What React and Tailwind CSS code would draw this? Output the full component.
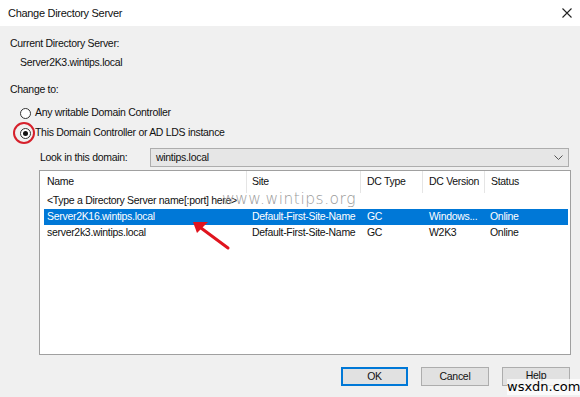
import React from 'react';

const cols = [
    { label: 'Name', w: 'w-[207px]', pl: 'pl-[7px]' },
    { label: 'Site', w: 'w-[114px]', pl: 'pl-[5px]' },
    { label: 'DC Type', w: 'w-[62px]', pl: 'pl-[6px]' },
    { label: 'DC Version', w: 'w-[62px]', pl: 'pl-[6px]' },
    { label: 'Status', w: 'w-[45px]', pl: 'pl-[6px]' },
];

const rows = [
    { name: 'Server2K16.wintips.local', site: 'Default-First-Site-Name', type: 'GC', ver: 'Windows...', status: 'Online', selected: true },
    { name: 'server2k3.wintips.local', site: 'Default-First-Site-Name', type: 'GC', ver: 'W2K3', status: 'Online' },
];

const Radio = ({ checked }) => (
    <div className="w-[11px] h-[11px] shrink-0 rounded-full border border-[#333] bg-white flex items-center justify-center">
        {checked && <div className="w-[5px] h-[5px] rounded-full bg-[#111]" />}
    </div>
);

const App = () => {
    return (
        <div className="relative w-[580px] h-[397px] overflow-hidden whitespace-nowrap bg-[#f0f0f0] text-[10.5px] tracking-[-0.3px] text-[#111] font-['Liberation_Sans',Arial,sans-serif]">
            {/* title bar */}
            <div className="h-[26px] bg-white flex items-center justify-between pl-[8px] pr-[8px]">
                <span className="text-[11px]">Change Directory Server</span>
                <svg width="10" height="10" viewBox="0 0 10 10">
                    <path d="M0.5 0.5 L9.5 9.5 M9.5 0.5 L0.5 9.5" stroke="#222" strokeWidth="1.1" />
                </svg>
            </div>

            <div className="px-[10px]">
                <div className="mt-[9px] h-[16px] leading-[16px]">Current Directory Server:</div>
                <div className="mt-[3px] h-[16px] leading-[16px] pl-[10px]">Server2K3.wintips.local</div>
                <div className="mt-[11px] h-[16px] leading-[16px]">Change to:</div>

                <div className="mt-[8px] h-[16px] pl-[10px] flex items-center gap-[4px]">
                    <Radio />
                    <span>Any writable Domain Controller</span>
                </div>
                <div className="relative mt-[4px] h-[16px] pl-[10px] flex items-center gap-[4px]">
                    <Radio checked />
                    <span>This Domain Controller or AD LDS instance</span>
                    <div className="absolute left-[3px] top-[-3px] w-[22px] h-[22px] rounded-full border-2 border-[#d6202b]" />
                </div>

                {/* domain combo */}
                <div className="mt-[7px] h-[19px] pl-[30px] flex items-center">
                    <span className="w-[110px]">Look in this domain:</span>
                    <div className="flex-1 h-[19px] mr-[1px] bg-[#e6e6e6] border border-[#adadad] flex items-center justify-between pl-[5px] pr-[5px]">
                        <span>wintips.local</span>
                        <svg width="9" height="6" viewBox="0 0 9 6">
                            <path d="M0.5 0.5 L4.5 4.5 L8.5 0.5" fill="none" stroke="#555" strokeWidth="1" />
                        </svg>
                    </div>
                </div>

                {/* server list */}
                <div className="mt-[3px] ml-[29px] w-[532px] h-[185px] bg-white border border-[#a0a0a0]">
                    <div className="h-[22px] flex items-center">
                        {cols.map((c, i) => (
                            <div
                                key={c.label}
                                className={`${c.w} ${c.pl} shrink-0 h-full flex items-center ${i < cols.length - 1 ? 'border-r border-[#e5e5e5]' : ''}`}
                            >
                                {c.label}
                            </div>
                        ))}
                    </div>
                    <div className="h-[16px] ml-[4px] pl-[3px] flex items-center">
                        &lt;Type a Directory Server name[:port] here&gt;
                    </div>
                    {rows.map((r) => (
                        <div
                            key={r.name}
                            className={`h-[16px] ml-[4px] mr-[2px] flex items-center ${r.selected ? 'bg-[#0078d7] text-white' : ''}`}
                        >
                            <span className="w-[203px] shrink-0 pl-[3px]">{r.name}</span>
                            <span className="w-[114px] shrink-0 pl-[5px]">{r.site}</span>
                            <span className="w-[62px] shrink-0 pl-[6px]">{r.type}</span>
                            <span className="w-[62px] shrink-0 pl-[6px]">{r.ver}</span>
                            <span className="pl-[5px]">{r.status}</span>
                        </div>
                    ))}
                </div>

                {/* buttons */}
                <div className="mt-[12px] flex justify-end gap-[13px]">
                    <button className="w-[67px] h-[19px] bg-[#e1e1e1] border-2 border-[#0078d7] flex items-center justify-center">OK</button>
                    <button className="w-[68px] h-[19px] bg-[#e1e1e1] border border-[#adadad] flex items-center justify-center">Cancel</button>
                    <button className="w-[68px] h-[19px] bg-[#e1e1e1] border border-[#adadad] flex items-start justify-center leading-[15px]">Help</button>
                </div>
            </div>

            {/* annotation arrow */}
            <svg className="absolute left-0 top-0 pointer-events-none" width="580" height="397">
                <line x1="228" y1="248" x2="201" y2="228" stroke="#e0141e" strokeWidth="3" strokeLinecap="round" />
                <polygon points="193,222 208,222 197,233" fill="#e0141e" />
            </svg>

            {/* watermarks */}
            <div className="absolute left-[222px] top-[189px] text-[15.5px] leading-[20px] text-[#9a9a9a] tracking-[0.5px] font-['DejaVu_Sans',sans-serif] font-light">
                www.wintips.org
            </div>
            <div className="absolute left-[507px] top-[379px] text-[13px] leading-[16px] tracking-normal text-black bg-white/70 font-['DejaVu_Sans',sans-serif]">
                wsxdn.com
            </div>
        </div>
    );
};

export default App;
